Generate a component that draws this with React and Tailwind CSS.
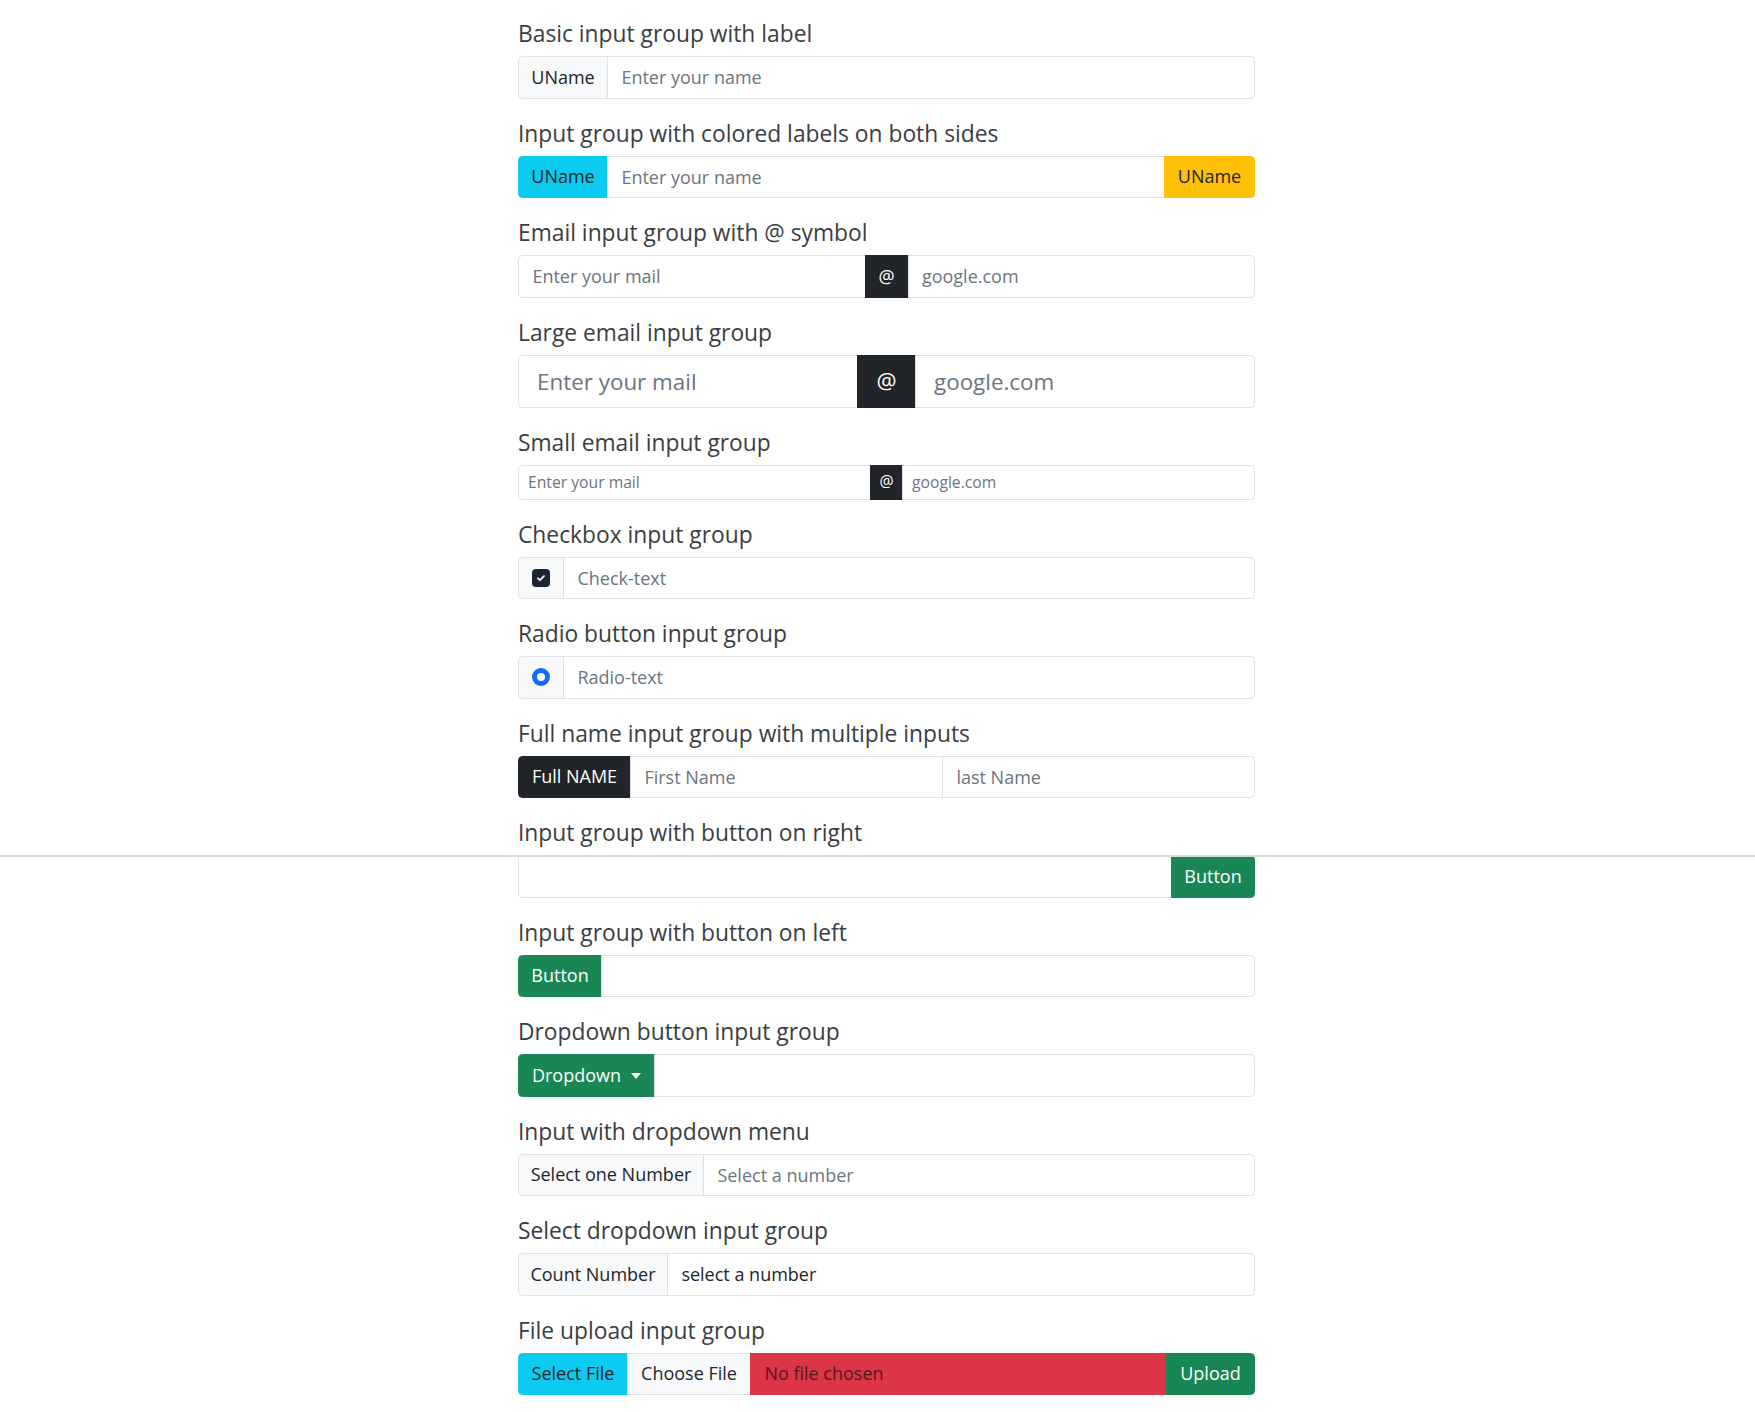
import React from 'react'

const font = "font-['Open_Sans',sans-serif]"

function Section({ title, children }) {
  return (
    <div className="mb-[21px]">
      <h5 className="text-[22.8px] font-medium leading-[27px] mb-[9px] text-[#3a3e42]">{title}</h5>
      {children}
    </div>
  )
}

// sizes: md is the default bootstrap-ish group scaled up
const sizes = {
  sm: 'h-[34.5px] text-[15.7px]',
  md: 'h-[42.5px] text-[18px]',
  lg: 'h-[53.5px] text-[22.4px]',
}

function Group({ size = 'md', children }) {
  return <div className={`flex ${sizes[size]}`}>{children}</div>
}

function Addon({ className = '', first, last, children }) {
  return (
    <div
      className={`flex items-center justify-center shrink-0 border whitespace-nowrap ${first ? 'rounded-l-[4.5px]' : '-ml-px'} ${last ? 'rounded-r-[4.5px]' : ''} ${className}`}
    >
      {children}
    </div>
  )
}

function Field({ placeholder, first, last, pad = 'px-[13.4px]' }) {
  return (
    <input
      type="text"
      placeholder={placeholder}
      className={`flex-1 min-w-0 h-full bg-white border border-[#dee2e6] ${pad} text-[#212529] placeholder:text-[#6c757d] outline-none ${first ? 'rounded-l-[4.5px]' : '-ml-px'} ${last ? 'rounded-r-[4.5px]' : ''}`}
    />
  )
}

const light = 'bg-[#f8f9fa] border-[#dee2e6] text-[#212529]'
const dark = 'bg-[#212529] border-[#212529] text-white'
const green = 'bg-[#198754] border-[#198754] text-white'

export default function App() {
  return (
    <div className={`relative min-h-[1412px] bg-white ${font}`}>
      <div className="absolute left-0 right-0 top-[855px] h-[2px] bg-[#dadada]" />
      <div className="ml-[518px] w-[737px] pt-[20px]">
        <Section title="Basic input group with label">
          <Group>
            <Addon first className={`w-[90px] ${light}`}>UName</Addon>
            <Field placeholder="Enter your name" last />
          </Group>
        </Section>

        <Section title="Input group with colored labels on both sides">
          <Group>
            <Addon first className="w-[90px] bg-[#0dcaf0] border-[#0dcaf0] text-[#212529]">UName</Addon>
            <Field placeholder="Enter your name" />
            <Addon last className="w-[91px] bg-[#ffc107] border-[#ffc107] text-[#212529]">UName</Addon>
          </Group>
        </Section>

        <Section title="Email input group with @ symbol">
          <Group>
            <Field placeholder="Enter your mail" first />
            <Addon className={`w-[44px] ${dark}`}>@</Addon>
            <Field placeholder="google.com" last />
          </Group>
        </Section>

        <Section title="Large email input group">
          <Group size="lg">
            <Field placeholder="Enter your mail" first pad="px-[18px]" />
            <Addon className={`w-[59px] ${dark}`}>@</Addon>
            <Field placeholder="google.com" last pad="px-[18px]" />
          </Group>
        </Section>

        <Section title="Small email input group">
          <Group size="sm">
            <Field placeholder="Enter your mail" first pad="px-[9px]" />
            <Addon className={`w-[33px] ${dark}`}>@</Addon>
            <Field placeholder="google.com" last pad="px-[9px]" />
          </Group>
        </Section>

        <Section title="Checkbox input group">
          <Group>
            <Addon first className={`w-[46px] ${light}`}>
              <span className="flex items-center justify-center w-[18px] h-[18px] rounded-[4px] bg-[#1b2435]">
                <svg width="12" height="12" viewBox="0 0 20 20" fill="none">
                  <path d="M5 10.5l3.2 3.2L15 7" stroke="white" strokeWidth="3" strokeLinecap="round" strokeLinejoin="round" />
                </svg>
              </span>
            </Addon>
            <Field placeholder="Check-text" last />
          </Group>
        </Section>

        <Section title="Radio button input group">
          <Group>
            <Addon first className={`w-[46px] ${light}`}>
              <span className="flex items-center justify-center w-[18px] h-[18px] rounded-full bg-[#0d6efd]">
                <span className="w-[8px] h-[8px] rounded-full bg-white" />
              </span>
            </Addon>
            <Field placeholder="Radio-text" last />
          </Group>
        </Section>

        <Section title="Full name input group with multiple inputs">
          <Group>
            <Addon first className={`w-[113px] ${dark}`}>Full NAME</Addon>
            <Field placeholder="First Name" />
            <Field placeholder="last Name" last />
          </Group>
        </Section>

        <Section title="Input group with button on right">
          <Group>
            <Field first />
            <Addon last className={`w-[84px] ${green}`}>Button</Addon>
          </Group>
        </Section>

        <Section title="Input group with button on left">
          <Group>
            <Addon first className={`w-[84px] ${green}`}>Button</Addon>
            <Field last />
          </Group>
        </Section>

        <Section title="Dropdown button input group">
          <Group>
            <Addon first className={`w-[137px] ${green}`}>
              Dropdown
              <span className="ml-[10px] mt-[1px] border-x-[5px] border-t-[6px] border-x-transparent border-t-white" />
            </Addon>
            <Field last />
          </Group>
        </Section>

        <Section title="Input with dropdown menu">
          <Group>
            <Addon first className={`w-[186px] ${light}`}>Select one Number</Addon>
            <Field placeholder="Select a number" last />
          </Group>
        </Section>

        <Section title="Select dropdown input group">
          <Group>
            <Addon first className={`w-[150px] ${light}`}>Count Number</Addon>
            <div className="flex-1 -ml-px flex items-center px-[13.4px] bg-white border border-[#dee2e6] rounded-r-[4.5px] text-[#212529]">
              select a number
            </div>
          </Group>
        </Section>

        <Section title="File upload input group">
          <Group>
            <Addon first className="w-[110px] bg-[#0dcaf0] border-[#0dcaf0] text-[#212529]">Select File</Addon>
            <div className="flex-1 flex -ml-px">
              <div className={`w-[123px] flex items-center justify-center border border-r-0 ${light}`}>Choose File</div>
              <div className="flex-1 flex items-center px-[13.4px] bg-[#dc3545] border border-[#dc3545] text-[#5a1520]">
                No file chosen
              </div>
            </div>
            <Addon last className={`w-[89px] ${green}`}>Upload</Addon>
          </Group>
        </Section>
      </div>
    </div>
  )
}
